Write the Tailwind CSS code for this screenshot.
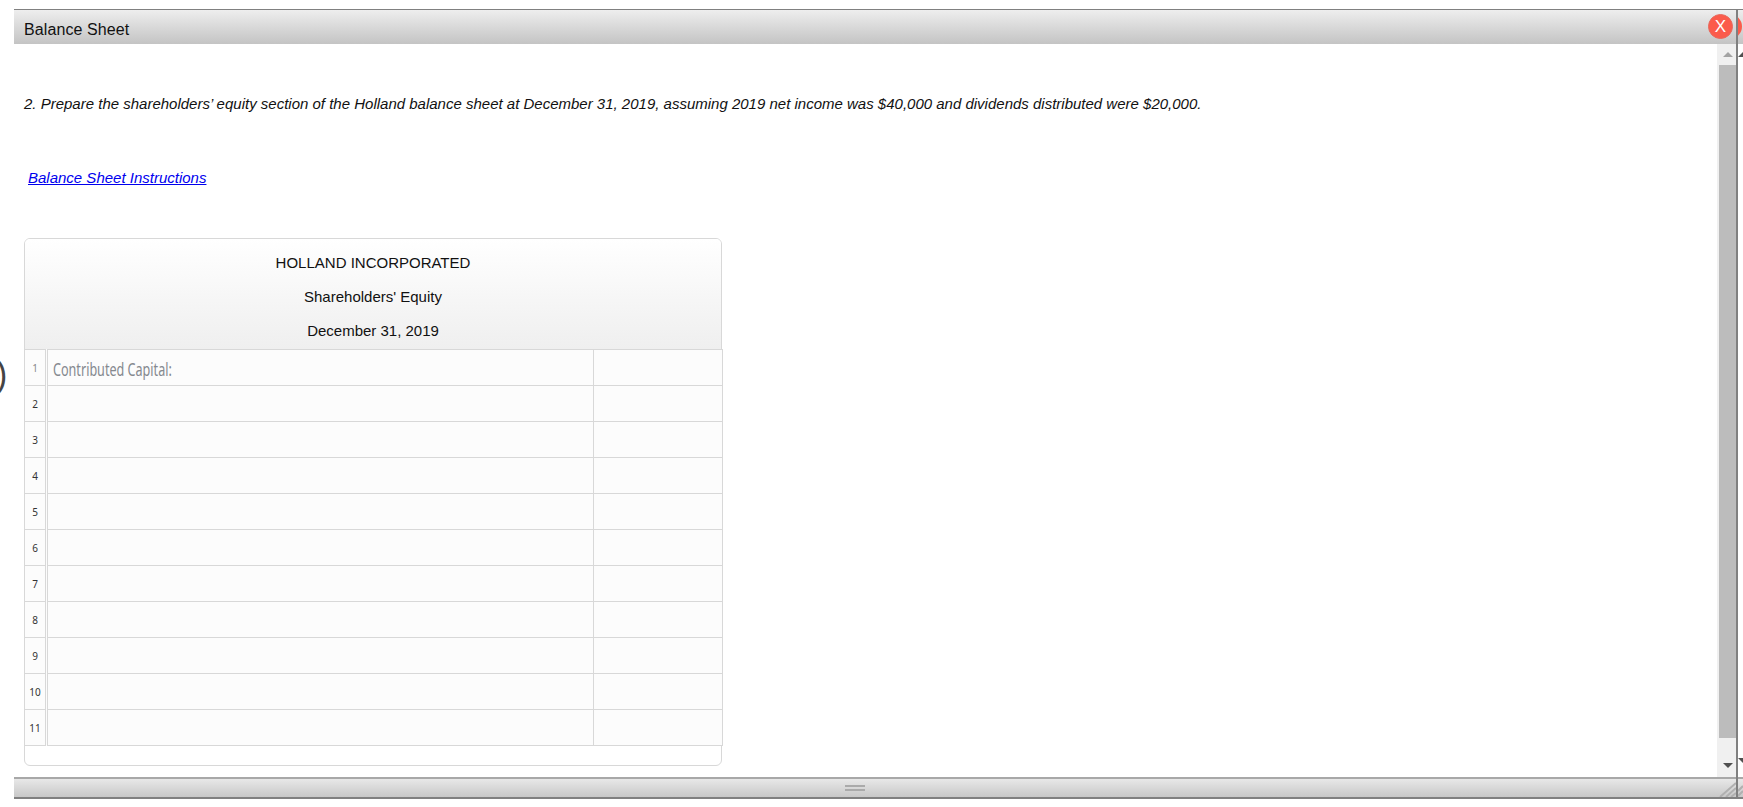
<!DOCTYPE html>
<html lang="en">
<head>
    <meta charset="UTF-8">
    <title>Balance Sheet</title>
    <script src="https://cdn.jsdelivr.net/npm/@tailwindcss/browser@4"></script>
</head>
<body class="bg-white text-black font-['Liberation_Sans',Arial,sans-serif] overflow-hidden">
<div class="relative w-[1743px] h-[807px] pt-[9px] pl-[14px] flex overflow-hidden">

    <!-- bit of the page behind the dialog -->
    <div class="absolute left-[-4px] top-[352px] text-[36px] leading-[44px] text-[#444] font-['Open_Sans',sans-serif]">)</div>

    <div class="w-[1724px] h-[790px] flex flex-col border-r-2 border-[#808080]">
        <div class="relative h-[35px] shrink-0 border-t border-[#808080] bg-gradient-to-b from-[#eeeeee] to-[#c4c4c4] pl-[10px] text-[16px] tracking-[0.1px] leading-[40px] text-[#111]">
            Balance Sheet
            <div class="absolute right-[3px] top-[4px] w-[25px] h-[25px] rounded-full bg-[#fb5b4b] border border-[#e8695c] text-white text-[17px] tracking-normal leading-[23px] text-center">X</div>
        </div>

        <div class="flex flex-1 min-h-0">
            <div class="flex-1 pl-[10px]">
                <p class="mt-[51px] text-[15px] leading-[18px] italic text-[#111]">2. Prepare the shareholders’ equity section of the Holland balance sheet at December 31, 2019, assuming 2019 net income was $40,000 and dividends distributed were $20,000.</p>
                <a href="#" class="block mt-[56px] ml-[4px] w-fit text-[15px] leading-[18px] italic text-[#0000ee] underline">Balance Sheet Instructions</a>

                <div class="relative mt-[51px] w-[698px] h-[528px] border border-[#d8d8d8] rounded-[6px] bg-white">
                    <div class="h-[110px] bg-gradient-to-b from-white to-[#efefef] rounded-t-[5px] text-center text-[15px] text-[#111] pt-[6px]">
                        <div class="h-[35px] leading-[36px]">HOLLAND INCORPORATED</div>
                        <div class="h-[35px] leading-[33px]">Shareholders' Equity</div>
                        <div class="h-[35px] leading-[31px]">December 31, 2019</div>
                    </div>
                    <table class="absolute left-[-1px] top-[110px] w-[699px] border-collapse table-fixed bg-[#fcfcfc] font-['Noto_Sans',sans-serif]">
                        <colgroup><col class="w-[22px]"><col class="w-[547px]"><col></colgroup>
                        <tbody class="text-[10px] text-[#333] [&_td]:pt-[2px]">
                            <tr class="h-[36px]"><td class="border border-[#d8d8d8] border-r-[3px] [border-right-style:double] text-center text-[#888]">1</td><td class="border border-[#d8d8d8] pl-[5px] text-[#85898f]"><span class="block origin-left scale-x-[0.70] whitespace-nowrap text-[18px] leading-[24px]">Contributed Capital:</span></td><td class="border border-[#d8d8d8]"></td></tr>
                            <tr class="h-[36px]"><td class="border border-[#d8d8d8] border-r-[3px] [border-right-style:double] text-center">2</td><td class="border border-[#d8d8d8]"></td><td class="border border-[#d8d8d8]"></td></tr>
                            <tr class="h-[36px]"><td class="border border-[#d8d8d8] border-r-[3px] [border-right-style:double] text-center">3</td><td class="border border-[#d8d8d8]"></td><td class="border border-[#d8d8d8]"></td></tr>
                            <tr class="h-[36px]"><td class="border border-[#d8d8d8] border-r-[3px] [border-right-style:double] text-center">4</td><td class="border border-[#d8d8d8]"></td><td class="border border-[#d8d8d8]"></td></tr>
                            <tr class="h-[36px]"><td class="border border-[#d8d8d8] border-r-[3px] [border-right-style:double] text-center">5</td><td class="border border-[#d8d8d8]"></td><td class="border border-[#d8d8d8]"></td></tr>
                            <tr class="h-[36px]"><td class="border border-[#d8d8d8] border-r-[3px] [border-right-style:double] text-center">6</td><td class="border border-[#d8d8d8]"></td><td class="border border-[#d8d8d8]"></td></tr>
                            <tr class="h-[36px]"><td class="border border-[#d8d8d8] border-r-[3px] [border-right-style:double] text-center">7</td><td class="border border-[#d8d8d8]"></td><td class="border border-[#d8d8d8]"></td></tr>
                            <tr class="h-[36px]"><td class="border border-[#d8d8d8] border-r-[3px] [border-right-style:double] text-center">8</td><td class="border border-[#d8d8d8]"></td><td class="border border-[#d8d8d8]"></td></tr>
                            <tr class="h-[36px]"><td class="border border-[#d8d8d8] border-r-[3px] [border-right-style:double] text-center">9</td><td class="border border-[#d8d8d8]"></td><td class="border border-[#d8d8d8]"></td></tr>
                            <tr class="h-[36px]"><td class="border border-[#d8d8d8] border-r-[3px] [border-right-style:double] text-center">10</td><td class="border border-[#d8d8d8]"></td><td class="border border-[#d8d8d8]"></td></tr>
                            <tr class="h-[36px]"><td class="border border-[#d8d8d8] border-r-[3px] [border-right-style:double] text-center">11</td><td class="border border-[#d8d8d8]"></td><td class="border border-[#d8d8d8]"></td></tr>
                        </tbody>
                    </table>
                </div>
            </div>

            <!-- scrollbar -->
            <div class="w-[19px] shrink-0 flex flex-col bg-[#f0f0f0]">
                <div class="h-[21px] flex items-center justify-center pl-[2px]">
                    <svg width="10" height="5" viewBox="0 0 10 5"><path d="M5 0 10 5H0Z" fill="#a3a3a3"/></svg>
                </div>
                <div class="ml-[2px] h-[673px] bg-[#bcbcbc]"></div>
                <div class="flex-1 flex items-center justify-center pl-[2px] pt-[16px]">
                    <svg width="10" height="5" viewBox="0 0 10 5"><path d="M0 0H10L5 5Z" fill="#505050"/></svg>
                </div>
            </div>
        </div>

        <div class="relative h-[22px] shrink-0 border-t-2 border-b-2 border-t-[#a8a8a8] border-b-[#808080] bg-gradient-to-b from-[#e8e8e8] to-[#c8c8c8] flex items-center justify-center">
            <div class="flex flex-col gap-[2px] mr-[40px]">
                <div class="w-[20px] h-[2px] bg-[#aaaaaa]"></div>
                <div class="w-[20px] h-[2px] bg-[#aaaaaa]"></div>
            </div>
            <svg class="absolute right-0 bottom-0" width="18" height="16" viewBox="0 0 18 16">
                <path d="M2 16 18 2M8 16 18 7M13 16 18 12" stroke="#b0b0b0" stroke-width="2" fill="none"/>
            </svg>
        </div>
    </div>

    <!-- edge of the dialog underneath -->
    <div class="w-[5px] h-[790px] shrink-0 flex flex-col overflow-hidden">
        <div class="relative h-[35px] shrink-0 border-t border-[#808080] bg-gradient-to-b from-[#eeeeee] to-[#c4c4c4]">
            <div class="absolute left-[-21px] top-[4px] w-[25px] h-[25px] rounded-full bg-[#fb5b4b]"></div>
        </div>
        <div class="flex-1 bg-white flex flex-col">
            <svg width="10" height="5" viewBox="0 0 10 5" class="shrink-0 mt-[8px]"><path d="M5 0 10 5H0Z" fill="#505050"/></svg>
            <svg width="10" height="5" viewBox="0 0 10 5" class="shrink-0 mt-[701px]"><path d="M0 0H10L5 5Z" fill="#505050"/></svg>
        </div>
        <div class="relative h-[22px] shrink-0 border-t-2 border-b-2 border-t-[#a8a8a8] border-b-[#808080] bg-gradient-to-b from-[#e8e8e8] to-[#c8c8c8]">
            <svg class="absolute left-0 bottom-0" width="5" height="16" viewBox="0 0 5 16">
                <path d="M0 10 5 5M0 15 5 10" stroke="#b0b0b0" stroke-width="2" fill="none"/>
            </svg>
        </div>
    </div>
</div>
</body>
</html>
